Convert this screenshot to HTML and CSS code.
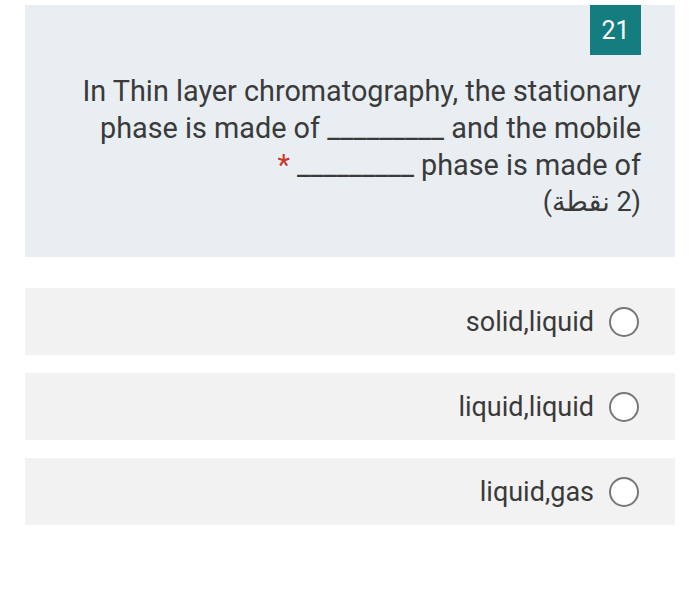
FILE: index.html
```
<!DOCTYPE html>
<html lang="en">
<head>
<meta charset="utf-8">
<link rel="stylesheet" href="styles.css">
</head>
<body>
<div class="page">
  <section class="question" dir="rtl">
    <div class="badge">21</div>
    <p class="qtext">In Thin layer chromatography, the stationary phase is made of _________ and the mobile phase is made of _________ <span class="req">*</span></p>
    <p class="points">(2 نقطة)</p>
  </section>
  <label class="option" dir="rtl"><span class="radio"></span><span class="label">solid,liquid</span></label>
  <label class="option" dir="rtl"><span class="radio"></span><span class="label">liquid,liquid</span></label>
  <label class="option" dir="rtl"><span class="radio"></span><span class="label">liquid,gas</span></label>
</div>
</body>
</html>
```
FILE: styles.css
```
html, body {
  margin: 0;
  padding: 0;
  background: #ffffff;
}
body {
  font-family: Roboto, "DejaVu Sans", sans-serif;
  color: #3a3a3a;
}
.page {
  width: 650px;
  margin-left: 25px;
  padding-top: 5px;
  display: flex;
  flex-direction: column;
  gap: 18px;
}
.question {
  background: #e8eef2;
  padding: 0 34px 36px 46px;
  display: flex;
  flex-direction: column;
  align-items: flex-start;
  margin-bottom: 13px;
}
.badge {
  width: 51px;
  height: 50px;
  background: #137d7f;
  color: #ffffff;
  font-size: 25px;
  display: flex;
  align-items: center;
  justify-content: center;
  margin-bottom: 18px;
}
.qtext, .points {
  margin: 0;
  font-size: 28.8px;
  line-height: 37px;
  text-align: right;
  align-self: stretch;
}
.points {
  font-size: 27px;
}
.req {
  color: #c53929;
}
.option {
  background: #f2f2f2;
  height: 67px;
  display: flex;
  align-items: center;
  gap: 15px;
  padding: 0 36px;
  font-size: 27px;
}
.radio {
  width: 26px;
  height: 26px;
  border: 2px solid #777777;
  border-radius: 50%;
  background: #ffffff;
  flex: none;
}
```
